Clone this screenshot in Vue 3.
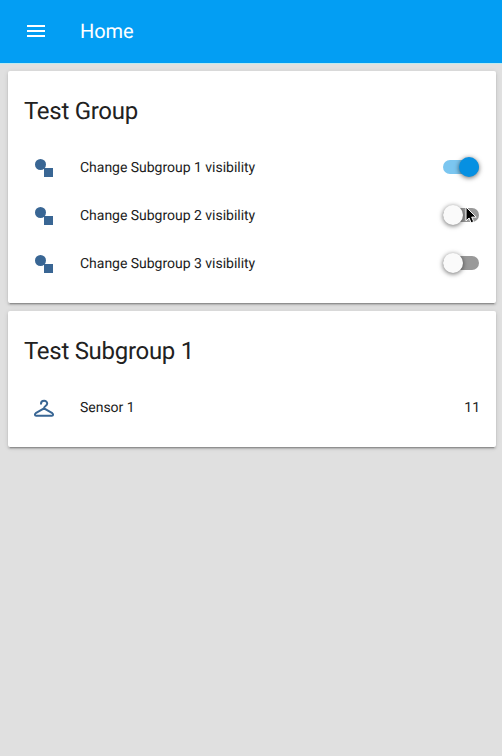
<script setup>
import { reactive } from 'vue'

const toggles = reactive([
  { name: 'Change Subgroup 1 visibility', on: true },
  { name: 'Change Subgroup 2 visibility', on: false, pointer: true },
  { name: 'Change Subgroup 3 visibility', on: false },
])
const sensors = [{ name: 'Sensor 1', value: '11' }]
</script>

<template>
  <div class="page">
    <header class="toolbar">
      <svg class="menu" viewBox="0 0 24 24"><path d="M3 6h18v2H3zM3 11h18v2H3zM3 16h18v2H3z" /></svg>
      <h1>Home</h1>
    </header>
    <main class="cards">
      <section class="card">
        <h2>Test Group</h2>
        <div v-for="item in toggles" :key="item.name" class="row">
          <svg class="icon" viewBox="0 0 24 24">
            <circle cx="8.5" cy="8.5" r="5.5" />
            <path d="M12 12h9v9h-9z" />
          </svg>
          <span class="name">{{ item.name }}</span>
          <button class="toggle" :class="{ on: item.on }" @click="item.on = !item.on">
            <span class="track"></span>
            <span class="knob"></span>
            <svg v-if="item.pointer" class="pointer" viewBox="0 0 12 18">
              <path d="M1 1v13.8l3.1-2.8 2 4.8 2.6-1.1-2-4.6h4.5z" />
            </svg>
          </button>
        </div>
      </section>
      <section class="card">
        <h2>Test Subgroup 1</h2>
        <div v-for="item in sensors" :key="item.name" class="row">
          <svg class="icon hanger" viewBox="0 0 24 24">
            <path d="M9 7.8C9 3.8 15.2 3.8 15.2 7.5C15.2 10.2 12 9.8 12 12.3L3.7 17.2C2.4 18.1 2.8 19.7 4.1 19.7H19.9C21.2 19.7 21.6 18.1 20.3 17.2L12 12.3" />
          </svg>
          <span class="name">{{ item.name }}</span>
          <span class="value">{{ item.value }}</span>
        </div>
      </section>
    </main>
  </div>
</template>

<style>
body {
  background: #e0e0e0;
}
</style>

<style scoped>
.page {
  min-height: 756px;
  box-sizing: border-box;
  background: #e0e0e0;
  color: #212121;
  font-family: Roboto, sans-serif;
  text-rendering: geometricPrecision;
}
.toolbar {
  display: flex;
  align-items: center;
  height: 63px;
  padding: 0 0 1px 24px;
  box-sizing: border-box;
  background: #039ef3;
  color: #fff;
  box-shadow: 0 1px 0 #bceaf0;
}
.menu {
  width: 24px;
  height: 24px;
  margin-right: 32px;
  fill: #fff;
}
h1 {
  margin: 0;
  font-size: 20px;
  font-weight: 400;
  line-height: 24px;
  letter-spacing: -0.1px;
}
.cards {
  display: flex;
  flex-direction: column;
  gap: 8px;
  padding: 8px 6px 8px 8px;
}
.card {
  padding: 20px 16px 16px;
  border-radius: 2px;
  background: #fff;
  box-shadow: 0 2px 2px 0 rgba(0, 0, 0, 0.14), 0 1px 5px 0 rgba(0, 0, 0, 0.12), 0 3px 1px -2px rgba(0, 0, 0, 0.2);
}
h2 {
  margin: 0;
  padding-bottom: 12px;
  font-size: 24px;
  font-weight: 400;
  line-height: 40px;
  letter-spacing: -0.012em;
}
.row {
  display: flex;
  align-items: center;
  height: 48px;
}
.icon {
  flex: none;
  width: 24px;
  height: 24px;
  margin: 2px 24px 0 8px;
  fill: #396694;
}
.hanger {
  fill: none;
  stroke: #396694;
  stroke-width: 2;
  stroke-linecap: round;
  stroke-linejoin: round;
}
.name,
.value {
  padding-top: 2px;
  font-size: 14px;
  line-height: 20px;
  letter-spacing: -0.02px;
}
.name {
  flex: 1;
}
.toggle {
  display: flex;
  align-items: center;
  position: relative;
  width: 36px;
  height: 20px;
  margin-right: 1px;
  padding: 0;
  border: 0;
  background: none;
}
.track {
  width: 36px;
  height: 14px;
  border-radius: 7px;
  background: #999;
}
.knob {
  position: absolute;
  top: 0;
  left: 0;
  width: 20px;
  height: 20px;
  border-radius: 50%;
  background: #fafafa;
  box-shadow: 0 1px 5px rgba(0, 0, 0, 0.6);
}
.on .track {
  background: #7bc6f0;
}
.on .knob {
  left: 16px;
  background: #0690e2;
}
.pointer {
  position: absolute;
  top: 1px;
  left: 22px;
  width: 12px;
  height: 18px;
  fill: #000;
  stroke: #fff;
  stroke-width: 1;
}
</style>
